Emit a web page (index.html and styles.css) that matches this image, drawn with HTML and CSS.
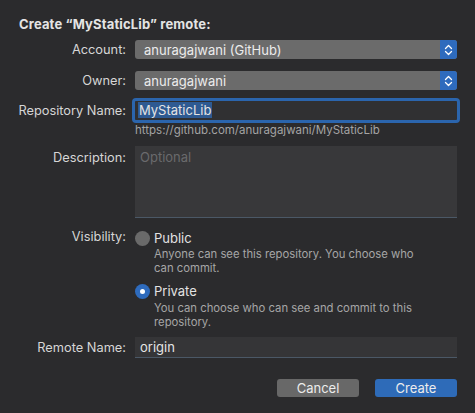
FILE: index.html
```html
<!DOCTYPE html>
<html>
<head>
<meta charset="utf-8">
<link rel="stylesheet" href="styles.css">
</head>
<body>
<div class="sheet">
  <h1 class="title">Create “MyStaticLib” remote:</h1>
  <div class="form">
    <label class="lbl r-account">Account:</label>
    <div class="popup r-account">
      <span class="popup-text">anuragajwani (GitHub)</span>
      <span class="stepper"><svg width="9" height="12" viewBox="0 0 9 12"><path d="M1.5 4.5 L4.5 1.5 L7.5 4.5 M1.5 7.5 L4.5 10.5 L7.5 7.5" fill="none" stroke="#fff" stroke-width="1.3" stroke-linecap="round" stroke-linejoin="round"/></svg></span>
    </div>

    <label class="lbl r-owner">Owner:</label>
    <div class="popup r-owner">
      <span class="popup-text">anuragajwani</span>
      <span class="stepper"><svg width="9" height="12" viewBox="0 0 9 12"><path d="M1.5 4.5 L4.5 1.5 L7.5 4.5 M1.5 7.5 L4.5 10.5 L7.5 7.5" fill="none" stroke="#fff" stroke-width="1.3" stroke-linecap="round" stroke-linejoin="round"/></svg></span>
    </div>

    <label class="lbl r-repo">Repository Name:</label>
    <div class="field focused r-repo"><span class="sel">MyStaticLib</span></div>

    <div class="hint r-url">https://github.com/anuragajwani/MyStaticLib</div>

    <label class="lbl lbl-top r-desc">Description:</label>
    <div class="textarea r-desc"><span class="placeholder">Optional</span></div>

    <label class="lbl r-vis">Visibility:</label>
    <div class="radio-group r-vis">
      <div class="radio">
        <span class="dot off"></span>
        <span class="radio-label">Public</span>
      </div>
      <div class="radio-desc">Anyone can see this repository. You choose who<br>can commit.</div>
      <div class="radio second">
        <span class="dot on"><span class="inner"></span></span>
        <span class="radio-label">Private</span>
      </div>
      <div class="radio-desc desc2">You can choose who can see and commit to this<br>repository.</div>
    </div>

    <label class="lbl r-remote">Remote Name:</label>
    <div class="field plain r-remote">origin</div>
  </div>
  <div class="buttons">
    <button class="btn cancel">Cancel</button>
    <button class="btn create">Create</button>
  </div>
</div>
</body>
</html>
```
FILE: styles.css
```css
html, body {
  margin: 0;
  padding: 0;
  background: #2b2b2d;
}
body {
  width: 475px;
  height: 413px;
  overflow: hidden;
  font-family: Inter, "Noto Sans", sans-serif;
  color: #dcdcdc;
}
.sheet {
  padding-top: 16px;
}
.title {
  margin: 0 0 0 19px;
  font-size: 13px;
  line-height: 16px;
  font-weight: 700;
  letter-spacing: 0.15px;
  color: #e4e4e4;
}
.form {
  display: grid;
  grid-template-columns: 126px 322px;
  column-gap: 9px;
  align-items: start;
}
.lbl {
  grid-column: 1;
  text-align: right;
  font-size: 12.8px;
  line-height: 19px;
  color: #d6d6d6;
}
.r-account { grid-row: 1; margin-top: 8px; }
.r-owner { grid-row: 2; margin-top: 12px; }
.r-repo { grid-row: 3; margin-top: 11px; }
.r-url { grid-row: 4; margin-top: 4px; }
.r-desc { grid-row: 5; margin-top: 10px; }
.r-vis { grid-row: 6; margin-top: 12px; }
.r-remote { grid-row: 7; margin-top: 8px; }
.lbl.r-desc { margin-top: 12px; }
.lbl.r-vis { margin-top: 11px; line-height: 16px; }
.lbl.r-remote { margin-top: 9px; }

.popup {
  grid-column: 2;
  height: 19px;
  background: #6b6b6b;
  border-radius: 3px;
  display: flex;
  align-items: center;
  overflow: hidden;
}
.popup-text {
  flex: 1;
  padding-left: 9px;
  font-size: 13px;
  color: #ececec;
}
.stepper {
  width: 17px;
  height: 19px;
  background: #2e6bbd;
  display: flex;
  align-items: center;
  justify-content: center;
}
.field {
  grid-column: 2;
  font-size: 13px;
  color: #e4e4e4;
  box-sizing: border-box;
}
.focused {
  height: 19px;
  background: #303032;
  outline: 3px solid #2b65ad;
  border-radius: 1px;
  padding-left: 3px;
  line-height: 19px;
}
.sel {
  background: #2e5a92;
  padding: 0 1px;
}
.hint {
  grid-column: 2;
  font-size: 11.5px;
  line-height: 12px;
  color: #a4a4a4;
}
.textarea {
  grid-column: 2;
  height: 72px;
  background: #38383a;
  border-bottom: 1px solid #4b5866;
  box-sizing: border-box;
  padding: 3px 0 0 5px;
  font-size: 13px;
  line-height: 16px;
}
.placeholder { color: #6a6a6c; }
.radio-group {
  grid-column: 2;
}
.radio {
  display: flex;
  align-items: center;
  height: 16px;
}
.radio.second { margin-top: 8px; }
.dot {
  width: 15px;
  height: 15px;
  border-radius: 50%;
  box-sizing: border-box;
  margin-right: 4px;
  display: flex;
  align-items: center;
  justify-content: center;
}
.dot.off { background: #6a6a6a; }
.dot.on { background: #2e6bbd; }
.dot .inner {
  width: 5px;
  height: 5px;
  border-radius: 50%;
  background: #fff;
}
.radio-label {
  font-size: 13px;
  color: #e2e2e2;
}
.radio-desc {
  margin: 1px 0 0 19px;
  font-size: 11.3px;
  line-height: 14px;
  color: #a6a6a6;
}
.radio-desc.desc2 { margin-top: 2px; }
.plain {
  height: 21px;
  background: #353537;
  border-bottom: 1px solid #4b5866;
  padding-left: 5px;
  line-height: 21px;
}
.buttons {
  display: flex;
  justify-content: flex-end;
  gap: 16px;
  margin: 21px 18px 0 0;
}
.btn {
  width: 82px;
  height: 18px;
  border: 0;
  border-radius: 3px;
  font-family: Inter, "Noto Sans", sans-serif;
  font-size: 13px;
  line-height: 18px;
  padding: 0;
  color: #ececec;
}
.cancel { background: #686868; }
.create { background: #2e6bb8; }
```
